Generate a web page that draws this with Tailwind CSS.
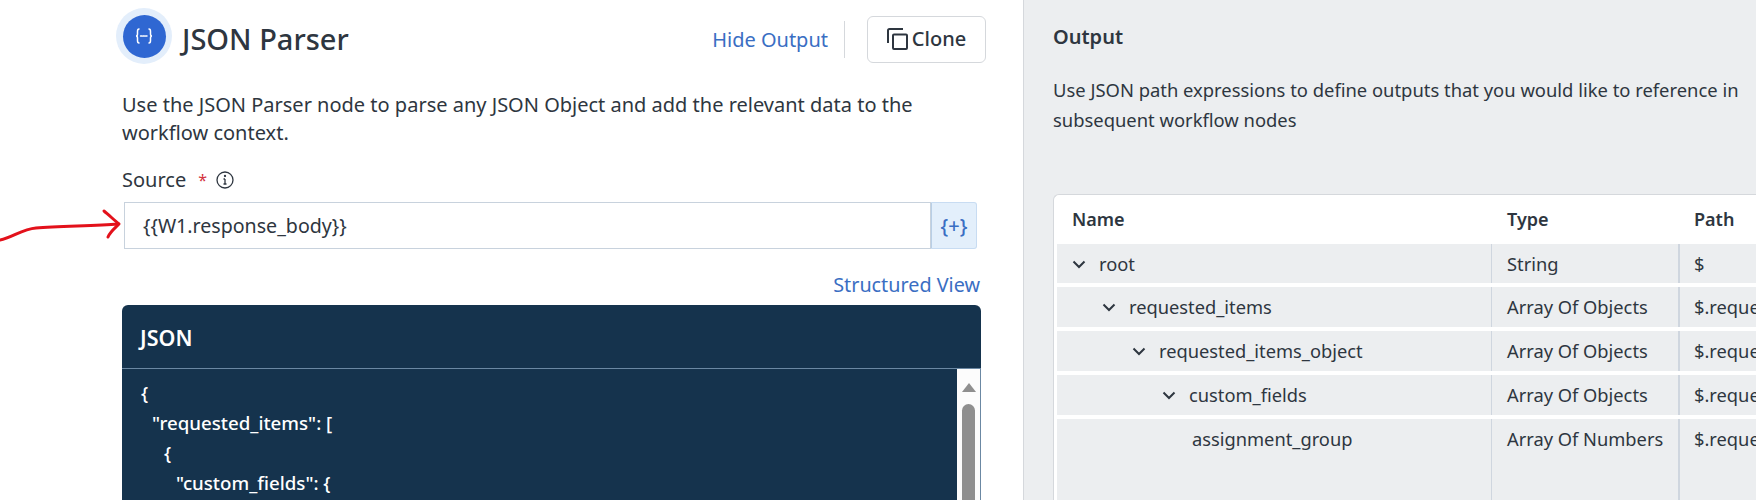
<!DOCTYPE html>
<html lang="en">
<head>
  <meta charset="UTF-8">
  <title>JSON Parser</title>
  <script src="https://cdn.jsdelivr.net/npm/@tailwindcss/browser@4"></script>
</head>
<body class="h-[500px] overflow-hidden bg-white font-['Noto_Sans',sans-serif] text-[#2e3640]">
  <div class="flex h-[500px]">
    <!-- Left panel -->
    <section class="relative w-[1024px] shrink-0 overflow-hidden border-r border-[#d5d8dc] pl-[122px] pr-[37px]">
      <svg class="absolute left-0 top-[205px]" width="124" height="40" viewBox="0 0 124 40" fill="none" stroke="#e3111b" stroke-width="3" stroke-linecap="round" stroke-linejoin="round">
        <path d="M0 35C12 33 22 24 36 23C60 21 95 21 118 19"/>
        <path d="M104 6C109 10 114 15 119 19C115 23 110 27 108 32"/>
      </svg>

      <header class="flex h-[72px] items-center -ml-[6px]">
        <div class="flex h-[56px] w-[56px] items-center justify-center rounded-full bg-[#e3eefb]">
          <div class="flex h-[43px] w-[43px] items-center justify-center rounded-full bg-[#2f67d2]">
            <svg width="18" height="16" viewBox="0 0 18 16" fill="none" stroke="#fff" stroke-width="1.500" stroke-linecap="round">
              <path d="M4 1C2.500 1 2.500 2 2.500 3.500V6C2.500 7 2 8 1 8C2 8 2.500 9 2.500 10V12.500C2.500 14 2.500 15 4 15"/>
              <path d="M14 1C15.500 1 15.500 2 15.500 3.500V6C15.500 7 16 8 17 8C16 8 15.500 9 15.500 10V12.500C15.500 14 15.500 15 14 15"/>
              <path d="M5.500 8H12.500" stroke-dasharray="1.500 1"/>
            </svg>
          </div>
        </div>
        <h1 class="ml-[10px] mt-[6px] text-[29px] font-medium">JSON Parser</h1>
        <div class="ml-auto mt-[6px] flex items-center">
          <a class="pt-[2px] text-[20px] text-[#3a6ec3]">Hide Output</a>
          <div class="ml-[16px] mr-[22px] h-[37px] w-px bg-[#d5d8dc]"></div>
          <button class="flex h-[47px] w-[119px] items-center justify-center gap-[4px] rounded-[6px] border border-[#d5d8dc] text-[20px] font-medium">
            <svg width="21" height="22" viewBox="0 0 21 22" fill="none" stroke="#2e3640" stroke-width="2" stroke-linejoin="round">
              <rect x="6" y="6.500" width="14" height="14.500" rx="1"/>
              <path d="M1 15V2.500C1 1.500 1.500 1 2.500 1H16"/>
            </svg>
            Clone
          </button>
        </div>
      </header>

      <p class="mt-[19px] max-w-[800px] text-[20px] leading-[28px]">Use the JSON Parser node to parse any JSON Object and add the relevant data to the workflow context.</p>

      <label class="mt-[19px] flex h-[28px] items-center text-[20px]">
        Source
        <span class="ml-[12px] text-[16px] text-[#d3333d]">*</span>
        <svg class="ml-[9px]" width="18" height="18" viewBox="0 0 18 18" fill="none" stroke="#2e3640" stroke-width="1.300">
          <circle cx="9" cy="9" r="8"/>
          <path d="M9 8V13M7.500 13H10.500M7.500 8H9"/>
          <circle cx="9" cy="5" r="0.500" fill="#2e3640"/>
        </svg>
      </label>

      <div class="mt-[8px] ml-[2px] mr-[9px] flex h-[47px]">
        <div class="flex flex-1 items-center border border-[#c8d2dd] pl-[18px] text-[19.600px]">{{W1.response_body}}</div>
        <div class="flex w-[46px] items-center justify-center rounded-r-[3px] border border-l-[#b9cfe6] border-[#c8dcf2] bg-[#e3effb] text-[20px] font-medium text-[#3a6ec3]">{+}</div>
      </div>

      <div class="mt-[22px] mr-[6px] text-right text-[19.800px] leading-[28px] text-[#3a6ec3]">Structured View</div>

      <div class="mt-[6px] mr-[5px] h-[300px] rounded-t-[6px] bg-[#15334d] text-white">
        <div class="flex h-[64px] items-center border-b border-[#6b88a3] px-[18px] pt-[4px] text-[21.500px] font-semibold">JSON</div>
        <div class="flex h-[236px]">
          <div class="flex-1 pl-[19px] pt-[9px] text-[18.700px] font-medium leading-[30px]">
            <div>{</div>
            <div class="pl-[11px]">"requested_items": [</div>
            <div class="pl-[23px]">{</div>
            <div class="pl-[35px]">"custom_fields": {</div>
          </div>
          <div class="w-[24px] border-r border-[#6b88a3] bg-[#fcfcfc] pt-[14px]">
            <div class="mx-auto h-0 w-0 border-x-[7.500px] border-b-[9px] border-x-transparent border-b-[#8f8f8f]"></div>
            <div class="mx-auto mt-[12px] h-[200px] w-[13px] rounded-t-full bg-[#8f8f8f]"></div>
          </div>
        </div>
      </div>
    </section>

    <!-- Output panel -->
    <section class="flex-1 overflow-hidden bg-[#eceef0] pl-[29px]">
      <h2 class="pt-[22px] text-[20px] font-semibold leading-[30px]">Output</h2>
      <p class="mt-[23px] w-[700px] text-[18.400px] leading-[30px]">Use JSON path expressions to define outputs that you would like to reference in subsequent workflow nodes</p>

      <div class="mt-[59px] rounded-tl-[6px] border-l border-t border-[#d5d8dc] bg-white pl-[3px]">
        <div class="grid h-[49px] grid-cols-[434px_187px_1fr] items-center text-[18px] font-semibold">
          <div class="pl-[15px]">Name</div>
          <div class="pl-[16px]">Type</div>
          <div class="pl-[16px]">Path</div>
        </div>
        <div class="flex flex-col gap-[4px] text-[18.300px]">
          <div class="grid h-[39px] grid-cols-[434px_187px_1fr] items-center bg-[#eceef0]">
            <div class="flex items-center pl-[15px]">
              <svg class="mr-[13px]" width="14" height="14" viewBox="0 0 14 14" fill="none" stroke="#2e3640" stroke-width="2"><path d="M1.500 4.500L7 10L12.500 4.500"/></svg>root
            </div>
            <div class="h-full content-center border-l border-[#cfd6df] pl-[15px]">String</div>
            <div class="h-full content-center border-l-2 border-[#cfd6df] pl-[14px]">$</div>
          </div>
          <div class="grid h-[40px] grid-cols-[434px_187px_1fr] items-center bg-[#eceef0]">
            <div class="flex items-center pl-[45px]">
              <svg class="mr-[13px]" width="14" height="14" viewBox="0 0 14 14" fill="none" stroke="#2e3640" stroke-width="2"><path d="M1.500 4.500L7 10L12.500 4.500"/></svg>requested_items
            </div>
            <div class="h-full content-center border-l border-[#cfd6df] pl-[15px]">Array Of Objects</div>
            <div class="h-full content-center border-l-2 border-[#cfd6df] pl-[14px]">$.requested_items</div>
          </div>
          <div class="grid h-[40px] grid-cols-[434px_187px_1fr] items-center bg-[#eceef0]">
            <div class="flex items-center pl-[75px] pb-[1px]">
              <svg class="mr-[13px]" width="14" height="14" viewBox="0 0 14 14" fill="none" stroke="#2e3640" stroke-width="2"><path d="M1.500 4.500L7 10L12.500 4.500"/></svg>requested_items_object
            </div>
            <div class="h-full content-center border-l border-[#cfd6df] pb-[1px] pl-[15px]">Array Of Objects</div>
            <div class="h-full content-center border-l-2 border-[#cfd6df] pb-[1px] pl-[14px]">$.requested_items[*]</div>
          </div>
          <div class="grid h-[40px] grid-cols-[434px_187px_1fr] items-center bg-[#eceef0]">
            <div class="flex items-center pl-[105px] pb-[1px]">
              <svg class="mr-[13px]" width="14" height="14" viewBox="0 0 14 14" fill="none" stroke="#2e3640" stroke-width="2"><path d="M1.500 4.500L7 10L12.500 4.500"/></svg>custom_fields
            </div>
            <div class="h-full content-center border-l border-[#cfd6df] pb-[1px] pl-[15px]">Array Of Objects</div>
            <div class="h-full content-center border-l-2 border-[#cfd6df] pb-[1px] pl-[14px]">$.requested_items[*]</div>
          </div>
          <div class="grid h-[90px] grid-cols-[434px_187px_1fr] bg-[#eceef0]">
            <div class="pl-[135px] pt-[6px]">assignment_group</div>
            <div class="border-l border-[#cfd6df] pl-[15px] pt-[6px]">Array Of Numbers</div>
            <div class="border-l-2 border-[#cfd6df] pl-[14px] pt-[6px]">$.requested_items[*]</div>
          </div>
        </div>
      </div>
    </section>
  </div>
</body>
</html>
